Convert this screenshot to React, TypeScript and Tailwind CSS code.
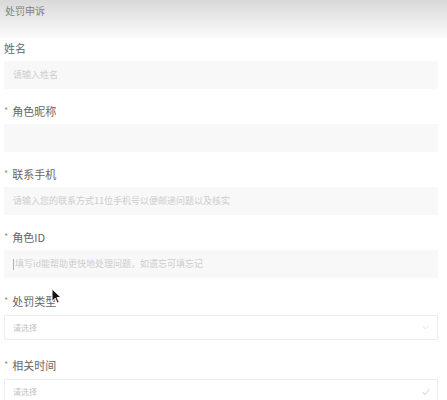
import { ChevronDown } from "lucide-react"

const fields = [
  { label: "姓名", required: false, placeholder: "请输入姓名" },
  { label: "角色昵称", required: true, placeholder: "" },
  { label: "联系手机", required: true, placeholder: "请输入您的联系方式11位手机号以便邮递问题以及核实" },
  { label: "角色ID", required: true, placeholder: "填写id能帮助更快地处理问题，如遗忘可填忘记", caret: true },
]

const selects = [
  { label: "处罚类型", icon: "chevron" },
  { label: "相关时间", icon: "check" },
]

function Label({ text, required }: { text: string; required: boolean }) {
  return (
    <div className="flex h-[16px] items-center text-[11px] leading-[16px] text-[#666]">
      {required && <span className="mr-[4px] text-[9px] text-[#999]">*</span>}
      {text}
    </div>
  )
}

export default function App() {
  return (
    <main
      className="relative h-[400px] w-[447px] overflow-hidden bg-white"
      style={{ fontFamily: '"Noto Sans CJK SC", "Noto Sans", sans-serif' }}
    >
      <div className="h-[38px] bg-gradient-to-b from-[#d9d9d9] to-[#fbfbfb] px-[5px] pt-[5px] text-[10px] leading-[12px] text-[#808080]">
        处罚申诉
      </div>

      <div className="mt-[2px] flex flex-col px-[4px] pr-[9px]">
        {fields.map((f) => (
          <div key={f.label} className="mb-[14px] flex flex-col gap-[5px]">
            <Label text={f.label} required={f.required} />
            <div className="flex h-[28px] items-center bg-[#f8f8f8] px-[9px] text-[9px] text-[#cdcdcd]">
              {f.caret && <span className="mr-[1px] h-[11px] w-px bg-[#b0b0b0]" />}
              {f.placeholder}
            </div>
          </div>
        ))}

        {selects.map((s, i) => (
          <div key={s.label} className={`flex flex-col gap-[6px] ${i === 0 ? "mb-[17px] mt-[1px]" : ""}`}>
            <Label text={s.label} required />
            <div className="flex h-[25px] items-center justify-between border border-[#eeeeee] bg-white pl-[8px] pr-[6px] text-[8px] text-[#c2c2c2]">
              请选择
              {s.icon === "chevron" ? (
                <ChevronDown className="h-[11px] w-[11px] text-[#d2d2d2]" strokeWidth={1.5} />
              ) : (
                <svg viewBox="0 0 12 12" className="h-[10px] w-[10px]" fill="none" stroke="#d6d6d6" strokeWidth="1.3">
                  <path d="M2 6.5l2.5 2.5L10 3" />
                </svg>
              )}
            </div>
          </div>
        ))}
      </div>

      <svg viewBox="0 0 12 18" className="absolute left-[51px] top-[288px] h-[16px] w-[11px]">
        <path d="M1 1v14l3.5-3.5 2.5 5.5 2-1-2.5-5.3H11z" fill="#111" stroke="#fff" strokeWidth="1" />
      </svg>
    </main>
  )
}
